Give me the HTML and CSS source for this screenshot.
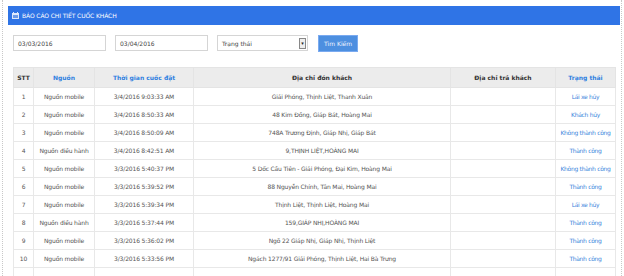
FILE: index.html
```html
<!doctype html>
<html>
<head>
<meta charset="utf-8">
<title>Báo cáo chi tiết cuốc khách</title>
<link rel="stylesheet" href="styles.css">
</head>
<body>
<div class="page">
	<div class="panel">
		<div class="panel_head">
			<svg class="cal" width="7" height="7" viewBox="0 0 7 7"><rect x="0" y="1" width="7" height="6" fill="#dfe9fb"/><rect x="1" y="0" width="1" height="2" fill="#dfe9fb"/><rect x="5" y="0" width="1" height="2" fill="#dfe9fb"/><rect x="1" y="3" width="5" height="3" fill="#6d9be8"/></svg>
			BÁO CÁO CHI TIẾT CUỐC KHÁCH
		</div>
		<div class="panel_body">
			<div class="filters">
				<div class="inp">03/03/2016</div>
				<div class="inp">03/04/2016</div>
				<div class="inp sel">Trạng thái <span class="drop">&#9662;</span></div>
				<div class="btn">Tìm Kiếm</div>
			</div>
			<table class="report">
				<tr>
					<th class="c1 dark">STT</th>
					<th class="c2">Nguồn</th>
					<th class="c3">Thời gian cuốc đặt</th>
					<th class="c4 dark">Địa chỉ đón khách</th>
					<th class="c5 dark">Địa chỉ trả khách</th>
					<th class="c6">Trạng thái</th>
				</tr>
				<tr><td>1</td><td>Nguồn mobile</td><td>3/4/2016 9:03:33 AM</td><td>Giải Phóng, Thịnh Liệt, Thanh Xuân</td><td></td><td class="st">Lái xe hủy</td></tr>
				<tr><td>2</td><td>Nguồn mobile</td><td>3/4/2016 8:50:33 AM</td><td>48 Kim Đồng, Giáp Bát, Hoàng Mai</td><td></td><td class="st">Khách hủy</td></tr>
				<tr><td>3</td><td>Nguồn mobile</td><td>3/4/2016 8:50:09 AM</td><td>748A Trương Định, Giáp Nhị, Giáp Bát</td><td></td><td class="st">Không thành công</td></tr>
				<tr><td>4</td><td>Nguồn điều hành</td><td>3/4/2016 8:42:51 AM</td><td>9,THỊNH LIỆT,HOÀNG MAI</td><td></td><td class="st">Thành công</td></tr>
				<tr><td>5</td><td>Nguồn mobile</td><td>3/3/2016 5:40:37 PM</td><td>5 Dốc Cầu Tiên - Giải Phóng, Đại Kim, Hoàng Mai</td><td></td><td class="st">Không thành công</td></tr>
				<tr><td>6</td><td>Nguồn mobile</td><td>3/3/2016 5:39:52 PM</td><td>88 Nguyễn Chính, Tân Mai, Hoàng Mai</td><td></td><td class="st">Thành công</td></tr>
				<tr><td>7</td><td>Nguồn mobile</td><td>3/3/2016 5:39:34 PM</td><td>Thịnh Liệt, Thịnh Liệt, Hoàng Mai</td><td></td><td class="st">Lái xe hủy</td></tr>
				<tr><td>8</td><td>Nguồn điều hành</td><td>3/3/2016 5:37:44 PM</td><td>159,GIÁP NHỊ,HOÀNG MAI</td><td></td><td class="st">Thành công</td></tr>
				<tr><td>9</td><td>Nguồn mobile</td><td>3/3/2016 5:36:02 PM</td><td>Ngõ 22 Giáp Nhị, Giáp Nhị, Thịnh Liệt</td><td></td><td class="st">Thành công</td></tr>
				<tr><td>10</td><td>Nguồn mobile</td><td>3/3/2016 5:33:56 PM</td><td>Ngách 1277/91 Giải Phóng, Thịnh Liệt, Hai Bà Trưng</td><td></td><td class="st">Thành công</td></tr>
				<tr><td></td><td></td><td></td><td></td><td></td><td></td></tr>
			</table>
		</div>
	</div>
</div>
</body>
</html>
```

FILE: styles.css
```css
* {margin: 0; padding: 0; box-sizing: border-box;}
html, body {height: 100%; overflow: hidden;}
body {
	background: #fff;
	font-family: "DejaVu Sans", Verdana, sans-serif;
	font-size: 6px;
	color: #555;
}
.page {
	height: 100%;
	margin-left: 2px;
	width: 620px;
	border-left: 1px dotted #c8c8c8;
	border-right: 1px dotted #c8c8c8;
	padding: 6px 0 0 5px;
}
.panel {
	width: 612px;
}
.panel_head {
	height: 19px;
	background: #2f74e6;
	color: #fff;
	font-size: 6px;
	display: flex;
	align-items: center;
	padding-left: 4px;
	gap: 3px;
	letter-spacing: -0.1px;
}
.cal {display: block;}
.panel_body {
	padding: 10px 5px 0 5px;
}
.filters {
	display: flex;
	height: 17px;
}
.inp {
	width: 93px;
	height: 16px;
	border: 1px solid #d5d5d5;
	background: #fff;
	color: #444;
	padding-left: 4px;
	display: flex;
	align-items: center;
	margin-right: 9px;
	font-size: 6px;
}
.sel {
	width: 91px;
	position: relative;
}
.drop {
	position: absolute;
	right: 1px;
	top: 2px;
	width: 7px;
	height: 11px;
	border: 1px solid #888;
	background: #eee;
	color: #222;
	font-size: 5px;
	line-height: 9px;
	text-align: center;
}
.btn {
	margin-left: 1px;
	width: 40px;
	height: 17px;
	background: #4d8fe0;
	border: 1px solid #7aaaf0;
	color: #eef4ff;
	font-size: 6px;
	display: flex;
	align-items: center;
	justify-content: center;
}
.report {
	margin-top: 15px;
	width: 602px;
	border-collapse: collapse;
	table-layout: fixed;
}
.report th {
	height: 20px;
	background: #ececec;
	color: #2f80e0;
	font-weight: bold;
	border: 1px solid #e4e4e4;
	font-size: 6px;
}
.report th.dark {color: #333;}
.report td {
	height: 18px;
	border: 1px solid #e8e8e8;
	text-align: center;
	white-space: nowrap;
	overflow: hidden;
	letter-spacing: -0.15px;
}
.report td.st {color: #3b86dc; letter-spacing: -0.3px;}
.c1 {width: 20px;}
.c2 {width: 61px;}
.c3 {width: 99px;}
.c4 {width: 257px;}
.c5 {width: 105px;}
.c6 {width: 60px;}
```
